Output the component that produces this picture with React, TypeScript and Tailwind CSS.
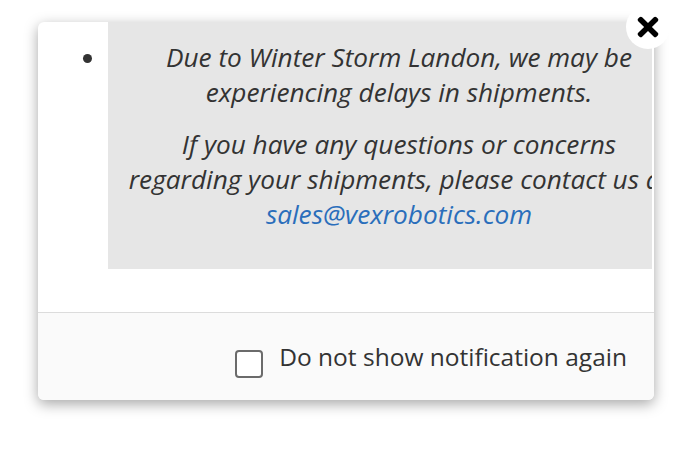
import { FaTimes } from "react-icons/fa";

export default function App() {
  return (
    <div className="w-[690px] h-[456px] bg-white relative font-['Open_Sans',sans-serif] text-[#333]">
      <div className="absolute left-[38px] top-[22px] w-[616px] rounded-[6px] bg-white shadow-[0_4px_14px_rgba(0,0,0,0.35)]">
        {/* body */}
        <div className="h-[291px] overflow-hidden rounded-t-[6px] border-b border-[#dcdcdc] pr-[2px]">
          <ul className="list-disc pl-[70px] marker:text-[#333] overflow-hidden">
            <li className="text-[26.2px] leading-[35px]">
              <div className="w-[582px] bg-[#e6e6e6] px-[18px] pt-[18px] pb-[20px] text-center italic">
                <p className="mb-[17px]">
                  Due to Winter Storm Landon, we may be experiencing delays in
                  shipments.
                </p>
                <p className="mb-[17px]">
                  If you have any questions or concerns regarding your
                  shipments, please contact us at{" "}
                  <a href="#" className="text-[#2a6ebb]">
                    sales@vexrobotics.com
                  </a>
                </p>
              </div>
            </li>
          </ul>
        </div>
        {/* footer */}
        <div className="h-[87px] bg-[#fafafa] rounded-b-[6px] flex items-center justify-end pr-[27px] gap-[16px]">
          <span className="w-[28px] h-[28px] mt-[14px] rounded-[4px] border-2 border-[#6b6b6b] bg-white" />
          <span className="text-[24.5px] leading-[32px]">
            Do not show notification again
          </span>
        </div>
      </div>
      {/* close */}
      <button className="absolute left-[626px] top-[5px] w-[44px] h-[44px] rounded-full bg-white flex items-center justify-center text-black">
        <FaTimes size={30} />
      </button>
    </div>
  );
}
